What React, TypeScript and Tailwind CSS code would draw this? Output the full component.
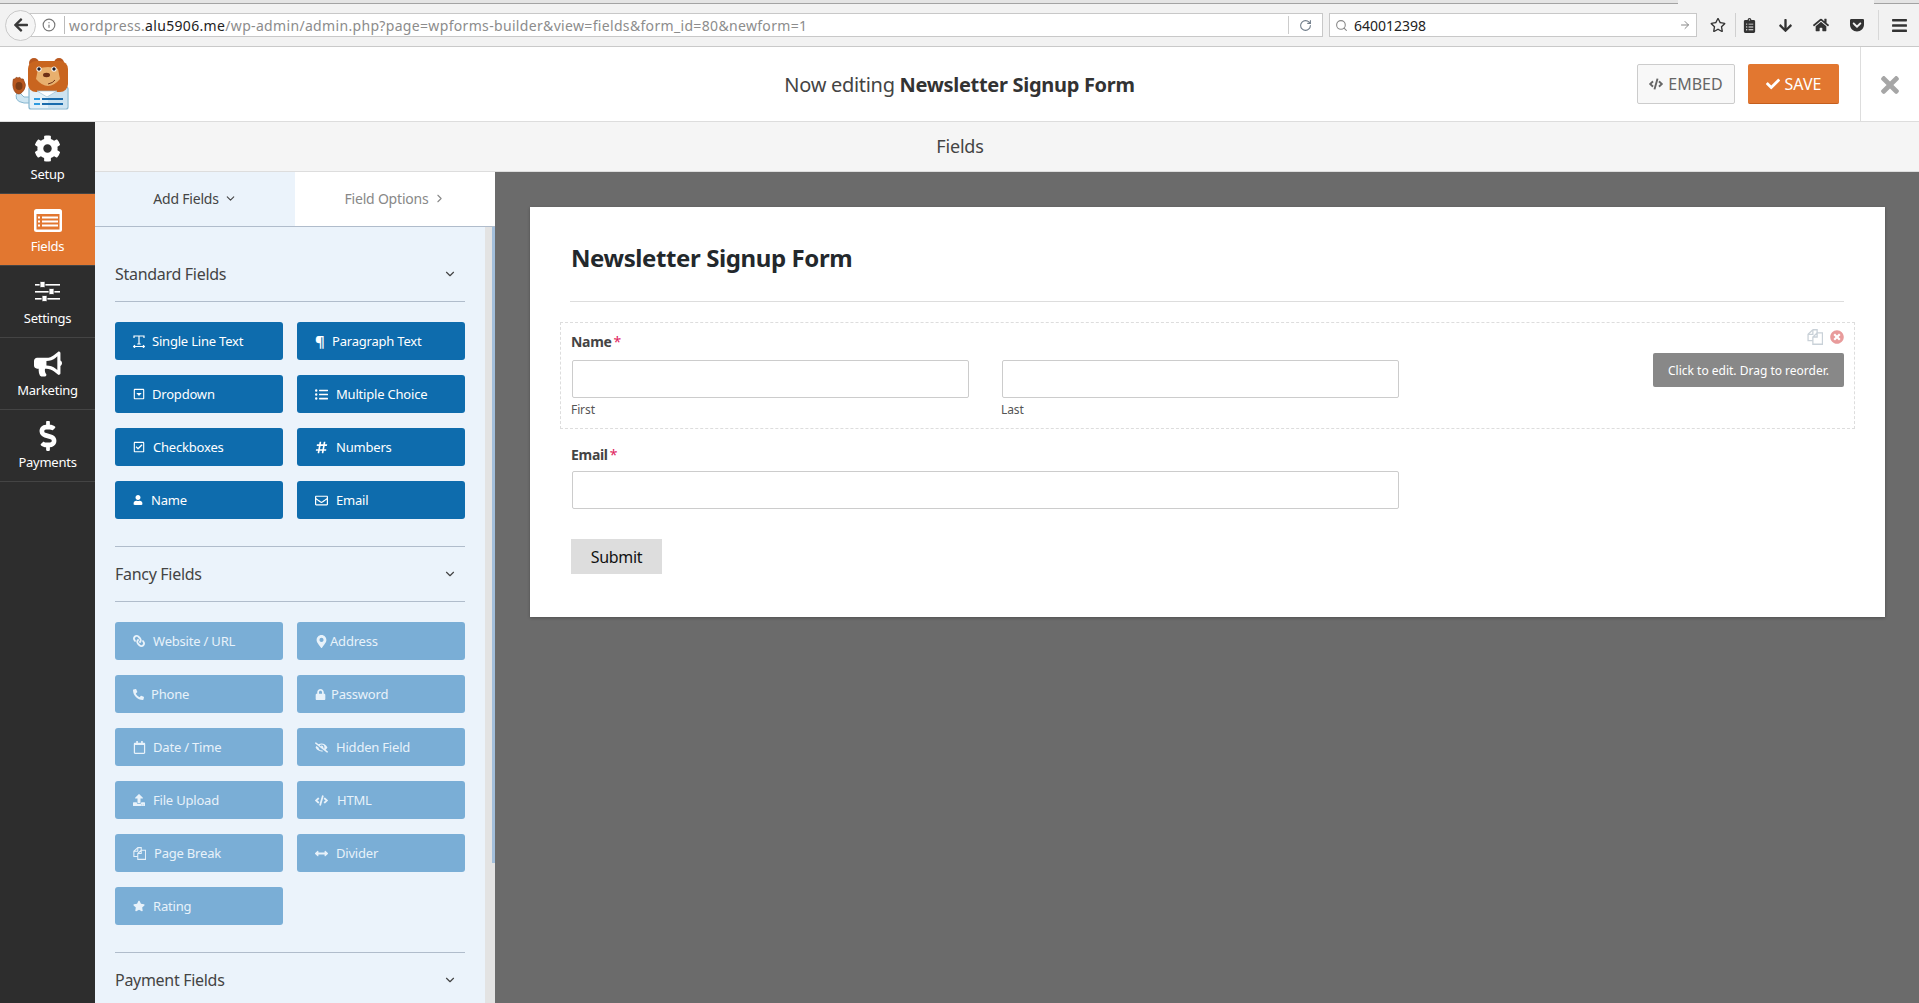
import type { ReactNode } from "react";
import {
  FaArrowDown,
  FaArrowLeft,
  FaArrowsAltH,
  FaBars,
  FaBullhorn,
  FaCheck,
  FaClipboardList,
  FaCode,
  FaCog,
  FaDollarSign,
  FaEyeSlash,
  FaGetPocket,
  FaHashtag,
  FaHome,
  FaLink,
  FaListUl,
  FaLock,
  FaMapMarkerAlt,
  FaPhone,
  FaRegCalendar,
  FaRegCaretSquareDown,
  FaRegCheckSquare,
  FaRegEnvelope,
  FaRegStar,
  FaStar,
  FaTimes,
  FaTimesCircle,
  FaUpload,
  FaUser,
} from "react-icons/fa";
import { ArrowRight, ChevronDown, ChevronRight, Info, RotateCw, Search } from "lucide-react";

type FieldBtn = { label: string; icon: ReactNode; box: string };

function TextLineIcon() {
  return (
    <svg width="12" height="13" viewBox="0 0 12 13" fill="none" stroke="currentColor" strokeWidth="1.2">
      <path d="M1 3V1h10v2M6 1v8M4.300 9h3.400M0.500 11.500h11M2 10.200L0.700 11.500 2 12.800M10 10.200l1.300 1.300L10 12.800" />
    </svg>
  );
}

function FilesIcon({ size = 13 }: { size?: number }) {
  return (
    <svg width={size} height={size} viewBox="0 0 15 15" fill="none" stroke="currentColor" strokeWidth="1.200">
      <path d="M5.500 0.700h4v3M5.500 0.700L1 5v6h4.500" />
      <path d="M1 5h4.500V0.700" />
      <path d="M9.500 3.700L5.500 7.500v6.800h9V3.700zM9.500 3.700v3.800h-4" />
    </svg>
  );
}

function FieldsIcon() {
  return (
    <svg width="28" height="23" viewBox="0 0 28 23">
      <rect width="28" height="23" rx="2.500" fill="#fff" />
      <rect x="2.500" y="5" width="23" height="15.500" fill="#e27730" />
      <g fill="#fff">
        <rect x="4" y="7.500" width="2" height="2" />
        <rect x="8" y="7.500" width="16" height="2" />
        <rect x="4" y="11.500" width="2" height="2" />
        <rect x="8" y="11.500" width="16" height="2" />
        <rect x="4" y="15.500" width="2" height="2" />
        <rect x="8" y="15.500" width="16" height="2" />
      </g>
    </svg>
  );
}

function SlidersIcon() {
  return (
    <svg width="25" height="22" viewBox="0 0 25 22" fill="#fff">
      <rect y="3" width="25" height="1.600" />
      <rect x="5" y="0.500" width="5" height="6" rx="0.500" stroke="#2d2d2d" strokeWidth="0.800" />
      <rect y="10" width="25" height="1.600" />
      <rect x="14" y="7.500" width="5" height="6" rx="0.500" stroke="#2d2d2d" strokeWidth="0.800" />
      <rect y="17" width="25" height="1.600" />
      <rect x="7" y="14.500" width="5" height="6" rx="0.500" stroke="#2d2d2d" strokeWidth="0.800" />
    </svg>
  );
}

const standardFields: FieldBtn[] = [
  { label: "Single Line Text", icon: <TextLineIcon />, box: "w-[19px]" },
  { label: "Paragraph Text", icon: <span className="text-[15px] font-bold leading-none">¶</span>, box: "w-[17px]" },
  { label: "Dropdown", icon: <FaRegCaretSquareDown size={12} />, box: "w-[19px]" },
  { label: "Multiple Choice", icon: <FaListUl size={13} />, box: "w-[21px]" },
  { label: "Checkboxes", icon: <FaRegCheckSquare size={12} />, box: "w-[20px]" },
  { label: "Numbers", icon: <FaHashtag size={13} />, box: "w-[21px]" },
  { label: "Name", icon: <FaUser size={10} />, box: "w-[18px]" },
  { label: "Email", icon: <FaRegEnvelope size={13} />, box: "w-[21px]" },
];

const fancyFields: FieldBtn[] = [
  { label: "Website / URL", icon: <FaLink size={12} className="-scale-x-100" />, box: "w-[20px]" },
  { label: "Address", icon: <FaMapMarkerAlt size={13} />, box: "w-[15px]" },
  { label: "Phone", icon: <FaPhone size={11} className="-scale-x-100" />, box: "w-[18px]" },
  { label: "Password", icon: <FaLock size={11} />, box: "w-[16px]" },
  { label: "Date / Time", icon: <FaRegCalendar size={13} />, box: "w-[20px]" },
  { label: "Hidden Field", icon: <FaEyeSlash size={13} />, box: "w-[21px]" },
  { label: "File Upload", icon: <FaUpload size={12} />, box: "w-[20px]" },
  { label: "HTML", icon: <FaCode size={13} />, box: "w-[22px]" },
  { label: "Page Break", icon: <FilesIcon />, box: "w-[21px]" },
  { label: "Divider", icon: <FaArrowsAltH size={13} />, box: "w-[21px]" },
  { label: "Rating", icon: <FaStar size={12} />, box: "w-[20px]" },
];

const sideItems = [
  { label: "Setup", icon: <FaCog size={27} />, active: false },
  { label: "Fields", icon: <FieldsIcon />, active: true },
  { label: "Settings", icon: <SlidersIcon />, active: false },
  { label: "Marketing", icon: <FaBullhorn size={28} />, active: false },
  { label: "Payments", icon: <FaDollarSign size={30} />, active: false },
];

function BearLogo() {
  return (
    <svg width="60" height="54" viewBox="0 0 60 54">
      <path d="M8 34 Q2 44 14 46 L22 46 L22 40 L14 40 Z" fill="#cfe6f2" stroke="#86b6cf" strokeWidth="1" />
      <path d="M3 24 Q3 21 5 22 Q6 19 8 21 Q10 19 11 22 Q14 21 14 24 Q17 28 14 33 Q10 39 6 36 Q2 32 3 24 Z" fill="#b9581f" stroke="#8f4216" strokeWidth="0.6" />
      <ellipse cx="9" cy="29" rx="3.5" ry="4" fill="#7d3d16" />
      <rect x="19" y="30" width="39" height="22" rx="2" fill="#e4f1f8" stroke="#86b6cf" strokeWidth="1.2" />
      <rect x="38" y="31" width="19" height="20" fill="#cde3f0" />
      <circle cx="24" cy="6" r="5" fill="#b9581f" />
      <circle cx="49" cy="6" r="5" fill="#b9581f" />
      <rect x="18" y="4" width="40" height="31" rx="8" fill="#c9651f" />
      <path d="M28 12 Q38 8 48 12 L50 22 Q38 36 26 22 Z" fill="#e8b06e" />
      <circle cx="29" cy="12" r="2.6" fill="#fff" />
      <circle cx="29" cy="12" r="1.7" fill="#1d1d2b" />
      <circle cx="44" cy="12" r="2.6" fill="#fff" />
      <circle cx="44" cy="12" r="1.7" fill="#1d1d2b" />
      <ellipse cx="36.500" cy="18" rx="3.500" ry="2.200" fill="#6d3017" />
      <path d="M38 27 Q43 26 45 23" stroke="#6d3017" strokeWidth="1" fill="none" />
      <path d="M27 34 L37 40 L47 34 Z" fill="#fff" stroke="#9cc3d8" strokeWidth="0.7" />
      <rect x="24" y="41" width="6" height="2" fill="#2d9be0" />
      <rect x="32" y="41" width="21" height="2" fill="#1a6cad" />
      <rect x="24" y="46" width="6" height="2" fill="#2d9be0" />
      <rect x="32" y="46" width="21" height="2" fill="#1a6cad" />
    </svg>
  );
}

function BrowserBar() {
  return (
    <div className="h-[47px] shrink-0 border-b border-[#c9c9c9] bg-[#f2f2f2]">
      <div className="flex h-1 items-start">
        <div className="h-1 w-[1678px] border-b border-[#a3a3a3] bg-[#e4e4e4]" />
        <div className="h-1 w-[196px] bg-[#f2f2f2]" />
        <div className="h-1 flex-1 border-b border-[#a3a3a3] bg-[#e4e4e4]" />
      </div>
      <div className="flex h-[42px] items-center pl-[5px]">
        <div className="relative z-10 flex h-[31px] w-[31px] items-center justify-center rounded-full border border-[#c9c9c9] bg-[#f5f5f5] text-[#3a3a3a]">
          <FaArrowLeft size={16} />
        </div>
        <div className="-ml-[16px] flex h-[24px] w-[1303px] items-center border border-[#c8c8c8] bg-white pl-[21px] text-[14px]">
          <Info size={14} className="mr-[8px] text-[#777]" />
          <div className="mr-[4px] h-[18px] w-px bg-[#bbb]" />
          <span className="tracking-[0.33px] text-[#8c8c8c]">
            wordpress.<span className="text-[#222]">alu5906.me</span>
            /wp-admin/admin.php?page=wpforms-builder&amp;view=fields&amp;form_id=80&amp;newform=1
          </span>
          <div className="ml-auto h-[18px] w-px bg-[#ccc]" />
          <RotateCw size={13} className="mx-[10px] text-[#6f7c89]" />
        </div>
        <div className="ml-[6px] flex h-[24px] w-[368px] items-center border border-[#c8c8c8] bg-white pl-[5px] text-[14px] text-[#222]">
          <Search size={13} className="mr-[6px] text-[#888]" />
          <span>640012398</span>
          <ArrowRight size={12} className="ml-auto mr-[5px] text-[#888]" />
        </div>
        <div className="ml-[3px] flex h-[24px] w-[36px] items-center justify-center border-r border-[#d0d0d0] text-[#333]">
          <FaRegStar size={16} />
        </div>
        <div className="flex w-[26px] justify-center text-[#333]">
          <FaClipboardList size={15} />
        </div>
        <div className="ml-[5px] flex w-[36px] justify-center text-[#333]">
          <FaArrowDown size={15} />
        </div>
        <div className="flex w-[36px] justify-center text-[#333]">
          <FaHome size={16} />
        </div>
        <div className="flex w-[36px] justify-center text-[#333]">
          <FaGetPocket size={16} />
        </div>
        <div className="ml-[3px] h-[30px] w-px bg-[#d8d8d8]" />
        <div className="flex w-[40px] justify-center text-[#333]">
          <FaBars size={17} />
        </div>
      </div>
    </div>
  );
}

function TopBar() {
  return (
    <div className="grid h-[75px] shrink-0 grid-cols-[1fr_auto_1fr] items-center border-b border-[#ddd] bg-white">
      <div className="pl-[10px]">
        <BearLogo />
      </div>
      <div className="pt-[1px] text-[20px] tracking-[-0.3px] text-[#444]">
        Now editing <span className="font-bold text-[#333]">Newsletter Signup Form</span>
      </div>
      <div className="flex h-full items-center justify-end">
        <button className="flex h-[40px] w-[98px] items-center justify-center gap-[5px] rounded-[2px] border border-[#ccc] bg-[#f8f8f8] text-[16px] text-[#666]">
          <FaCode size={14} />
          EMBED
        </button>
        <button className="ml-[13px] flex h-[40px] w-[91px] items-center justify-center gap-[5px] rounded-[2px] border-b border-[#c45e1d] bg-[#e27730] text-[16px] text-white">
          <FaCheck size={14} />
          SAVE
        </button>
        <div className="ml-[21px] flex h-full w-[59px] items-center justify-center border-l border-[#ddd] pt-[1px] text-[#a6a6a6]">
          <FaTimes size={26} />
        </div>
      </div>
    </div>
  );
}

function Sidebar() {
  return (
    <div className="w-[95px] shrink-0 bg-[#2d2d2d]">
      {sideItems.map((item) => (
        <div
          key={item.label}
          className={
            item.active
              ? "flex h-[72px] flex-col items-center border-b border-[#444] bg-[#e27730] pt-[10px] text-white"
              : "flex h-[72px] flex-col items-center border-b border-[#444] pt-[10px] text-white"
          }
        >
          <div className="flex h-[32px] items-center justify-center">{item.icon}</div>
          <div className="mt-[1px] text-[13px] leading-[18px] tracking-[-0.25px]">{item.label}</div>
        </div>
      ))}
    </div>
  );
}

function FieldButtons({ items, light }: { items: FieldBtn[]; light?: boolean }) {
  return (
    <div className="mt-[20px] grid grid-cols-2 gap-x-[14px] gap-y-[15px]">
      {items.map((b) => (
        <button
          key={b.label}
          className={
            light
              ? "flex h-[38px] items-center rounded-[3px] bg-[#7aaed6] pl-[18px] text-[13px] tracking-[-0.2px] text-[#e8f2fa]"
              : "flex h-[38px] items-center rounded-[3px] bg-[#0e6cad] pl-[18px] text-[13px] tracking-[-0.2px] text-white"
          }
        >
          <span className={`${b.box} flex shrink-0 items-center`}>{b.icon}</span>
          <span className="pt-[1px]">{b.label}</span>
        </button>
      ))}
    </div>
  );
}

function SectionHead({ title, first }: { title: string; first?: boolean }) {
  return (
    <div className={first ? "" : "mt-[27px] border-t border-[#b0bccb] pt-[10px]"}>
      <div className="flex h-[34px] items-center justify-between pr-[8px] text-[16px] tracking-[-0.3px] text-[#444]">
        <span>{title}</span>
        <ChevronDown size={14} strokeWidth={2} className="text-[#444]" />
      </div>
    </div>
  );
}

function FieldsPanel() {
  return (
    <div className="flex w-[400px] shrink-0 flex-col bg-[#ebf3fb]">
      <div className="flex h-[55px] shrink-0 border-b border-[#b0bccb] text-[14px] tracking-[-0.2px]">
        <div className="flex w-[200px] items-center justify-center gap-[5px] pb-[1px] text-[#444]">
          Add Fields <ChevronDown size={13} />
        </div>
        <div className="flex w-[200px] items-center justify-center gap-[4px] bg-white pb-[1px] text-[#888]">
          Field Options <ChevronRight size={13} />
        </div>
      </div>
      <div className="flex min-h-0 flex-1 overflow-hidden">
        <div className="w-[390px] shrink-0 px-5 pt-[30px]">
          <SectionHead title="Standard Fields" first />
          <div className="mt-[10px] h-px bg-[#b0bccb]" />
          <FieldButtons items={standardFields} />
          <SectionHead title="Fancy Fields" />
          <div className="mt-[10px] h-px bg-[#b0bccb]" />
          <FieldButtons items={fancyFields} light />
          <SectionHead title="Payment Fields" />
        </div>
        <div className="flex w-[10px] shrink-0 justify-end bg-[#e3e3e3]">
          <div className="h-[636px] w-[3px] bg-[#a3bfdb]" />
        </div>
      </div>
    </div>
  );
}

function TextInput({ width }: { width: string }) {
  return <div className={`${width} h-[38px] rounded-[2px] border border-[#ccc] bg-white`} />;
}

function FormCard() {
  return (
    <div className="h-[410px] bg-white px-[41px] shadow-[0_1px_3px_rgba(0,0,0,0.25)]">
      <h1 className="pt-[36px] text-[24px] font-bold leading-[30px] tracking-[-0.4px] text-[#23282c]">
        Newsletter Signup Form
      </h1>
      <div className="-ml-px mt-[28px] h-px w-[1274px] bg-[#ddd]" />
      <div className="relative -ml-[11px] mt-[20px] h-[107px] w-[1295px] border border-dashed border-[#ddd] pl-[10px] pt-[10px]">
        <div className="text-[14px] font-bold leading-[18px] tracking-[-0.3px] text-[#444]">
          Name<span className="ml-[2px] font-normal text-[#e0245e]">*</span>
        </div>
        <div className="ml-px mt-[9px] flex gap-[33px]">
          <div>
            <TextInput width="w-[397px]" />
            <div className="-ml-px mt-[3px] text-[12px] leading-[18px] tracking-[-0.1px] text-[#555]">First</div>
          </div>
          <div>
            <TextInput width="w-[397px]" />
            <div className="-ml-px mt-[3px] text-[12px] leading-[18px] tracking-[-0.1px] text-[#555]">Last</div>
          </div>
        </div>
        <div className="absolute right-[10px] top-[6px] flex items-center gap-[7px]">
          <span className="text-[#c9d1d8]">
            <FilesIcon size={16} />
          </span>
          <FaTimesCircle size={14} className="text-[#e89b9b]" />
        </div>
        <div className="absolute right-[10px] top-[30px] flex h-[34px] w-[191px] items-center justify-center rounded-[2px] bg-[#888] pt-px text-[12px] text-white">
          Click to edit. Drag to reorder.
        </div>
      </div>
      <div className="mt-[17px] text-[14px] font-bold leading-[18px] tracking-[-0.3px] text-[#444]">
        Email<span className="ml-[2px] font-normal text-[#e0245e]">*</span>
      </div>
      <div className="ml-px mt-[7px]">
        <TextInput width="w-[827px]" />
      </div>
      <button className="mt-[30px] flex h-[35px] w-[91px] items-center justify-center bg-[#ddd] text-[16px] tracking-[-0.3px] text-[#111]">
        Submit
      </button>
    </div>
  );
}

export default function App() {
  return (
    <div className="flex h-screen flex-col overflow-hidden font-['Noto_Sans',sans-serif]">
      <BrowserBar />
      <TopBar />
      <div className="flex min-h-0 flex-1">
        <Sidebar />
        <div className="flex min-w-0 flex-1 flex-col">
          <div className="flex h-[50px] shrink-0 items-center justify-center border-b border-[#ddd] bg-[#f5f5f5] pr-[94px] text-[18px] tracking-[-0.2px] text-[#444]">
            Fields
          </div>
          <div className="flex min-h-0 flex-1">
            <FieldsPanel />
            <div className="min-w-0 flex-1 bg-[#6b6b6b] pl-[35px] pr-[34px] pt-[35px]">
              <FormCard />
            </div>
          </div>
        </div>
      </div>
    </div>
  );
}
